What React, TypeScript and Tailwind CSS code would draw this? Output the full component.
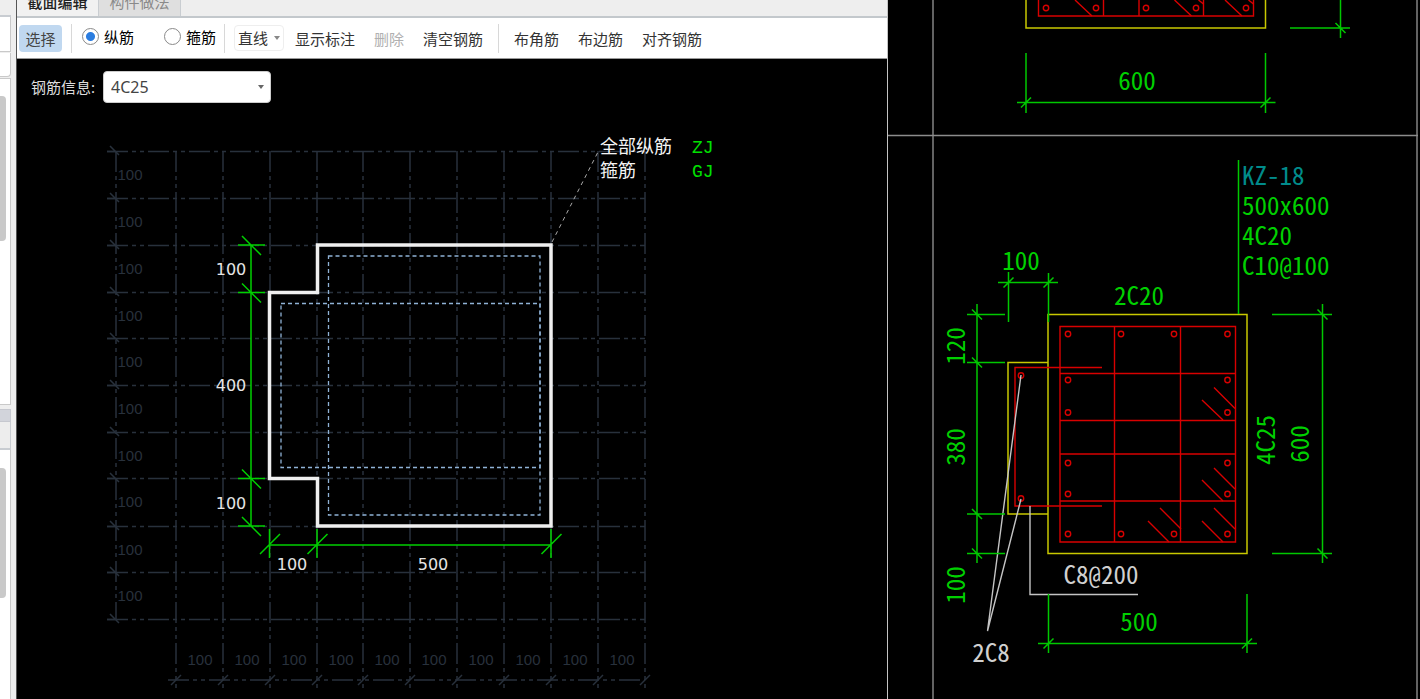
type Point = [number, number];

const gridColumns = [176, 223, 270, 317, 363, 410, 457, 504, 551, 598, 645];
const gridRows = [151, 198, 245, 292, 338, 385, 432, 478, 526, 572, 619];

const longitudinalBars: Point[] = [
  [1068, 334], [1121, 334], [1174, 334], [1227.5, 334],
  [1068, 380], [1227.5, 380],
  [1068, 412.5], [1227.5, 412.5],
  [1068, 463], [1227.5, 463],
  [1068, 494], [1227.5, 494],
  [1068, 534], [1121, 534], [1174, 534], [1227.5, 534],
  [1021, 375.5], [1021, 498.5],
];

const toolButtonClassName = "whitespace-nowrap text-[15px] leading-5 text-[#333]";

function Separator() {
  return <span className="h-[29px] w-px bg-[#d8d8d8]" />;
}

function Caret() {
  return (
    <svg viewBox="0 0 6 4" className="pointer-events-none absolute right-[7px] top-1/2 h-1 w-1.5 -translate-y-1/2">
      <path d="M0 0h6L3 4z" fill="#666" />
    </svg>
  );
}

function SidePanels() {
  return (
    <aside className="flex min-h-0 flex-col border-r border-[#555] bg-[#eee] pr-[5px]">
      <div className="h-[17px] shrink-0 border-b-2 border-[#c8ccd1]" />
      <div className="h-[35px] shrink-0 border-b border-r border-[#c9c9c9] bg-white" />
      <div className="mt-px h-6 shrink-0 rounded-br border-b border-r border-[#c9c9c9] bg-white" />
      <div className="mt-px h-[327px] shrink-0 border-y border-r border-[#c9c9c9] bg-white pt-[17px]">
        <div className="h-[145px] w-[6px] rounded-r bg-[#c9c9c9]" />
      </div>
      <div className="mt-[4px] h-[13px] shrink-0 border border-l-0 border-[#c6c8cf] bg-[#d2d4db]" />
      <div className="h-7 shrink-0 border-b-2 border-r border-[#c8ccd1] bg-[#ededed]" />
      <div className="flex-1 border-r border-[#c9c9c9] bg-white pt-[18px]">
        <div className="h-[130px] w-[6px] rounded-r bg-[#c9c9c9]" />
      </div>
    </aside>
  );
}

function Tabs() {
  return (
    <div role="tablist" className="flex h-[18px] shrink-0 items-end overflow-hidden border-b-2 border-[#c3c8cc] bg-[#eee] text-[15px]">
      <button type="button" role="tab" aria-selected="true" className="h-6 w-[82px] border-r border-[#c9cdd1] bg-[#f1f1f1] pb-1 font-medium leading-5 text-[#222]">
        截面编辑
      </button>
      <button type="button" role="tab" aria-selected="false" className="h-6 w-[82px] border-r border-[#c9cdd1] bg-[#dfdfdf] pb-1 leading-5 text-[#8a8a8a]">
        构件做法
      </button>
    </div>
  );
}

function BarKindRadio({ label, defaultChecked }: { label: string; defaultChecked?: boolean }) {
  return (
    <label className="flex items-center gap-[5px] whitespace-nowrap text-[15px] leading-5 text-black">
      <input
        type="radio"
        name="barKind"
        defaultChecked={defaultChecked}
        className="size-[17px] appearance-none rounded-full border border-[#8a8a8a] bg-white checked:bg-[radial-gradient(circle,#2b7de0_4px,#fff_5px)]"
      />
      {label}
    </label>
  );
}

function Toolbar() {
  return (
    <div className="flex h-[41px] shrink-0 items-center border-b border-[#999] bg-white pl-0.5 pt-px">
      <button type="button" className="h-[27px] w-[43px] rounded bg-[#c0d8f0] text-[15px] leading-5 text-[#444]">
        选择
      </button>
      <div className="ml-[9px] flex items-center gap-[10px]">
        <Separator />
        <div className="flex gap-[30px] pb-1">
          <BarKindRadio label="纵筋" defaultChecked />
          <BarKindRadio label="箍筋" />
        </div>
      </div>
      <div className="ml-2 flex items-center gap-[9px]">
        <Separator />
        <div className="relative mb-0.5">
          <select aria-label="绘制方式" className="h-[26px] w-[50px] appearance-none rounded border border-[#eee] bg-white pl-[3px] text-[15px] leading-5 text-[#333]">
            <option>直线</option>
          </select>
          <svg viewBox="0 0 6 4" className="pointer-events-none absolute right-1 top-1/2 h-1 w-1.5 -translate-y-1/2">
            <path d="M0 0h6L3 4z" fill="#888" />
          </svg>
        </div>
      </div>
      <div className="ml-[11px] flex items-center gap-[19px]">
        <button type="button" className={toolButtonClassName}>显示标注</button>
        <button type="button" disabled className="whitespace-nowrap text-[15px] leading-5 text-[#b0b0b0]">删除</button>
        <button type="button" className={toolButtonClassName}>清空钢筋</button>
      </div>
      <div className="ml-[15px] flex items-center gap-[15px]">
        <Separator />
        <div className="flex items-center gap-[19px]">
          <button type="button" className={toolButtonClassName}>布角筋</button>
          <button type="button" className={toolButtonClassName}>布边筋</button>
          <button type="button" className={toolButtonClassName}>对齐钢筋</button>
        </div>
      </div>
    </div>
  );
}

function SectionCanvas() {
  return (
    <svg viewBox="17 119 870 580" preserveAspectRatio="xMinYMin meet" className="block w-full">
      <g stroke="#28313c" strokeWidth="1.5" strokeDasharray="21 4 4 4 4 4">
        {gridRows.map((y) => (
          <path key={y} d={`M107 ${y + 0.5}H645`} />
        ))}
        {gridColumns.map((x) => (
          <path key={x} d={`M${x} 151V688`} />
        ))}
        <path d="M116 151V620M168 680H645" />
      </g>
      <g stroke="#28313c" strokeWidth="1.5">
        {gridRows.map((y) => (
          <path key={y} d={`M110 ${y - 5}l9 9M107 ${y + 0.5}h9`} />
        ))}
        {gridColumns.map((x) => (
          <path key={x} d={`M${x - 5} 685l10 -10`} />
        ))}
      </g>
      <g fill="#28313c" fontSize="15" textAnchor="middle" className="font-['Liberation_Sans',sans-serif]">
        {gridRows.slice(0, 10).map((y) => (
          <text key={y} x="130" y={y + 29}>100</text>
        ))}
        {gridColumns.slice(0, 10).map((x) => (
          <text key={x} x={x + 24} y="665">100</text>
        ))}
      </g>

      <path d="M317.5 245H551V526H317.5V478.5H269.5V292.5H317.5Z" fill="none" stroke="#efefef" strokeWidth="3.5" />
      <g fill="none" stroke="#8fb2d6" strokeWidth="1.3" strokeDasharray="4 3">
        <path d="M328.5 256H540V515H328.5Z" />
        <path d="M281 303.5H540V467.500H281Z" />
      </g>
      <path d="M552 242L598 152" stroke="#aaa" strokeDasharray="4 4" />

      <g stroke="#00d000" strokeWidth="1.5">
        <path d="M251 245V526M269.5 545H551" />
        {[245, 292.5, 478.5, 526].map((y) => (
          <path key={y} d={`M238 ${y}h27M242 ${y - 9}l19 19`} />
        ))}
        {[269.5, 317, 551].map((x) => (
          <path key={x} d={`M${x} 529v29M${x - 9.5} 554l20 -20`} />
        ))}
      </g>
      <g fill="#e6e6e6" fontSize="16" textAnchor="middle" className="font-['DejaVu_Sans',sans-serif]">
        <text x="231" y="275">100</text>
        <text x="231" y="391">400</text>
        <text x="231" y="509">100</text>
        <text x="292" y="570">100</text>
        <text x="433" y="570">500</text>
      </g>
      <g fill="#f4f4f4" fontSize="18" className="font-['Noto_Sans_CJK_SC',sans-serif]">
        <text x="600" y="153">全部纵筋</text>
        <text x="600" y="177">箍筋</text>
      </g>
      <g fill="#00e000" fontSize="18" className="font-['Liberation_Mono',monospace]">
        <text x="692" y="153">ZJ</text>
        <text x="692" y="177">GJ</text>
      </g>
    </svg>
  );
}

function SectionEditor() {
  return (
    <main className="flex min-h-0 min-w-0 flex-col overflow-hidden bg-black">
      <Tabs />
      <Toolbar />
      <div className="flex h-[60px] shrink-0 items-center gap-2 pb-1 pl-[14px] text-[15px]">
        <label htmlFor="barInfo" className="whitespace-nowrap leading-5 text-[#ddd]">钢筋信息:</label>
        <div className="relative">
          <select id="barInfo" className="h-8 w-[168px] appearance-none rounded border border-[#ccc] bg-white pl-[7px] text-base leading-5 text-[#444]">
            <option>4C25</option>
          </select>
          <Caret />
        </div>
      </div>
      <SectionCanvas />
    </main>
  );
}

function DrawingPreview() {
  return (
    <section className="min-h-0 min-w-0 overflow-hidden bg-black">
      <svg viewBox="887 0 533 699" preserveAspectRatio="xMinYMin meet" className="block w-full">
        <g stroke="#c4c4c4">
          <path d="M887.5 0V699M933 0V699M1417 0V699" />
          <path d="M888 135.5H1418" stroke="#8c8c8c" strokeWidth="1.5" />
        </g>

        {/* section above, cut off by the frame */}
        <path d="M1026 0V28H1265.5V0" fill="none" stroke="#c8c800" strokeWidth="1.5" />
        <g fill="none" stroke="#d80000" strokeWidth="1.4">
          <path d="M1038.5 0V16H1253.5V0M1103.5 0V16M1139 0V16M1203.5 0V16" />
          <path d="M1075 0l17 16M1174.5 0l17 16M1225 0l17 16M1198.5 0l5 4M1248.5 0l5 4" />
          {[1046, 1096, 1146, 1196, 1246].map((x) => (
            <circle key={x} cx={x} cy="8" r="2.7" />
          ))}
        </g>
        <g stroke="#00c800" strokeWidth="1.5">
          <path d="M1340.5 0V38M1290 28H1350M1335.5 23l10 10" />
          <path d="M1017 102.5H1275.5M1026 53V113M1265.5 53V113M1021 107.5l10 -10M1260.5 107.5l10 -10" />
        </g>

        {/* KZ-18 outline and stirrups */}
        <path d="M1048 314.5H1247V553.5H1048ZM1048 362.5H1008V514H1048" fill="none" stroke="#c8c800" strokeWidth="1.5" />
        <g fill="none" stroke="#d80000" strokeWidth="1.4">
          <path d="M1060 326.5H1235.5V542H1060ZM1114.5 326.5V542M1180.5 326.5V542" />
          <path d="M1060 373.5H1235.5M1060 420.5H1235.5M1060 454H1235.5M1060 501H1235.5" />
          <path d="M1102 367.5H1015V506H1102" />
          <path d="M1214 387.5l21 21M1202 400l21 20M1214 468l21 21M1202 480l21 21" />
          <path d="M1214 508l21 21M1202 521l21 21M1160 508l21 21M1148 521l21 21" />
          {longitudinalBars.map(([x, y]) => (
            <circle key={`${x}-${y}`} cx={x} cy={y} r="2.7" />
          ))}
        </g>
        <g fill="none" stroke="#c4c4c4" strokeWidth="1.4">
          <path d="M1021 375L987.5 631L1021 499" />
          <path d="M1030 506V594.5H1138" />
        </g>

        {/* dimension lines */}
        <g stroke="#00c800" strokeWidth="1.5">
          <path d="M998 282.5H1058M1008.5 272V322M1048.5 273V322M1003.5 287.5l10 -10M1043.5 287.5l10 -10" />
          <path d="M977 304V563M1322.5 304V563" />
          {[314.5, 362.5, 514, 553.5].map((y) => (
            <path key={y} d={`M967 ${y}h38M972 ${y - 5}l10 10`} />
          ))}
          {[314.5, 553.5].map((y) => (
            <path key={y} d={`M1272 ${y}h60M1317.5 ${y - 5}l10 10`} />
          ))}
          <path d="M1038 643.5H1257M1048.5 594V653M1247 594V653M1043.5 648.5l10 -10M1242 648.5l10 -10" />
          <path d="M1238.5 160V314" />
        </g>

        <g fill="#00d000" fontSize="25" className="font-['Noto_Sans_Mono_CJK_SC','Noto_Sans_CJK_SC',sans-serif] font-light">
          <text x="1242" y="185" fill="#008b8b">KZ-18</text>
          <text x="1242" y="215">500x600</text>
          <text x="1242" y="245">4C20</text>
          <text x="1242" y="275">C10@100</text>
          <g textAnchor="middle">
            <text x="1137" y="90">600</text>
            <text x="1021" y="270">100</text>
            <text x="1139" y="305">2C20</text>
            <text x="1139" y="631">500</text>
            <text transform="translate(965 346) rotate(-90)">120</text>
            <text transform="translate(965 447) rotate(-90)">380</text>
            <text transform="translate(965 585) rotate(-90)">100</text>
            <text transform="translate(1275 440) rotate(-90)">4C25</text>
            <text transform="translate(1309 444) rotate(-90)">600</text>
            <g fill="#d0d0d0">
              <text x="1101" y="584">C8@200</text>
              <text x="991" y="662">2C8</text>
            </g>
          </g>
        </g>
      </svg>
    </section>
  );
}

export default function App() {
  return (
    <div className="grid h-screen grid-cols-[17px_870fr_533fr] grid-rows-1 overflow-hidden bg-black font-['Noto_Sans','Noto_Sans_CJK_SC',sans-serif]">
      <SidePanels />
      <SectionEditor />
      <DrawingPreview />
    </div>
  );
}
